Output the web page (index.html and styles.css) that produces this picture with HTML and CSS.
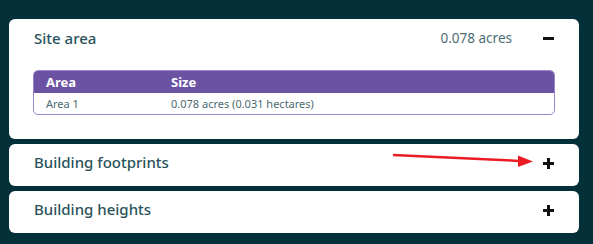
FILE: index.html
```html
<!DOCTYPE html>
<html lang="en">
<head>
    <meta charset="UTF-8">
    <title>Site summary</title>
    <link rel="stylesheet" href="styles.css">
</head>
<body>
    <div class="panels">
        <div class="panel">
            <div class="panelHead">
                <span class="panelTitle">Site area</span>
                <span class="panelValue">0.078 acres</span>
                <span class="toggle minus"></span>
            </div>
            <div class="areaTable">
                <div class="areaRow areaHead">
                    <span>Area</span>
                    <span>Size</span>
                </div>
                <div class="areaRow">
                    <span>Area 1</span>
                    <span>0.078 acres (0.031 hectares)</span>
                </div>
            </div>
        </div>

        <div class="panel closed">
            <div class="panelHead">
                <span class="panelTitle">Building footprints</span>
                <span class="toggle plus"></span>
            </div>
            <!-- annotation arrow -->
            <svg class="arrow" width="150" height="16" viewBox="0 0 150 16">
                <line x1="1" y1="2" x2="128" y2="8" stroke="#ec1c24" stroke-width="2.5"/>
                <polygon points="126,2.5 141,8.5 126,14" fill="#ec1c24"/>
            </svg>
        </div>

        <div class="panel closed">
            <div class="panelHead">
                <span class="panelTitle">Building heights</span>
                <span class="toggle plus"></span>
            </div>
        </div>
    </div>
</body>
</html>
```
FILE: styles.css
```css
body {
    margin: 0;
    background-color: #04303a;
    font-family: "Noto Sans", sans-serif;
    height: 244px;
    overflow: hidden;
}
.panels {
    display: flex;
    flex-direction: column;
    gap: 5px;
    padding: 19px 14px 0 9px;
}
.panel {
    position: relative;
    background-color: white;
    border-radius: 6px;
    padding: 0 24px 24px 24px;
}
.panel.closed {
    padding-bottom: 0;
}
.panelHead {
    display: flex;
    align-items: center;
    height: 40px;
    padding-left: 1px;
}
.closed .panelHead {
    height: 42px;
    box-sizing: border-box;
    padding-bottom: 4px;
}
.panelTitle {
    flex: 1;
    font-size: 15px;
    font-weight: 500;
    color: #2a525c;
    margin-bottom: 3px;
}
.panelValue {
    font-size: 13.5px;
    color: #4d6c74;
    margin-right: 31px;
    margin-bottom: 3px;
}
.toggle {
    position: relative;
    width: 11px;
    height: 11px;
    margin-right: 1px;
}
.toggle::before, .plus::after {
    content: "";
    position: absolute;
    background-color: #111;
}
.toggle::before {
    left: 0;
    right: 0;
    top: 4px;
    height: 3px;
}
.minus::before {
    top: 3px;
}
.plus::after {
    top: 0;
    bottom: 0;
    left: 4px;
    width: 3px;
}
.areaTable {
    margin-top: 11px;
    border: 1.5px solid #9b84cc;
    border-radius: 5px;
    overflow: hidden;
}
.areaRow {
    display: grid;
    grid-template-columns: 125px 1fr;
    height: 21px;
    align-items: center;
    padding-left: 12px;
    font-size: 11px;
    color: #4a6a70;
}
.areaHead {
    background-color: #6b52a3;
    color: white;
    font-size: 13px;
    font-weight: 700;
    height: 22px;
}
.arrow {
    position: absolute;
    left: 383px;
    top: 9px;
}
```
